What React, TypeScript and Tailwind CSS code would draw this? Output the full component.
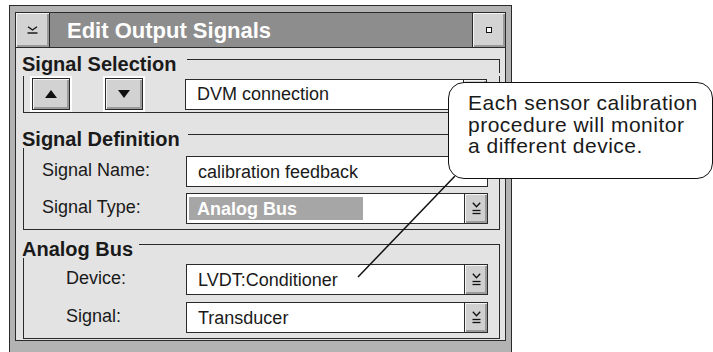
import React from 'react';

const ink = 'border-[#2a2a2a]';

function DropIcon() {
  return (
    <svg width="9" height="13" viewBox="0 0 9 13" fill="none" stroke="#111" strokeWidth="1.3">
      <polyline points="0.8,0.8 4.5,4.8 8.2,0.8" />
      <line x1="0.5" y1="8.5" x2="8.5" y2="8.5" />
      <line x1="0.5" y1="11.5" x2="8.5" y2="11.5" />
    </svg>
  );
}

function Field({children, drop, plain = true}: {children: React.ReactNode; drop?: boolean; plain?: boolean}) {
  return (
    <div className={`flex h-[31px] w-[302px] border ${ink} bg-white`}>
      <div className={`flex-1 flex items-center text-[18px] leading-none ${plain ? 'pl-[11px]' : 'pl-[2px]'}`}>
        {children}
      </div>
      {drop && (
        <div className={`w-[23px] border-l ${ink} bg-[#d0d0d0] shadow-[inset_1px_1px_0_#f4f4f4,inset_-2px_-2px_0_#9a9a9a] flex items-center justify-center`}>
          <DropIcon />
        </div>
      )}
    </div>
  );
}

function Group({title, gap, children, className}: {title: string; gap: string; children: React.ReactNode; className?: string}) {
  return (
    <div className={className}>
      <div className="flex">
        <div className="text-[20px] font-bold leading-[18px]">{title}</div>
        <div className={`flex-1 mt-[4px] border-t border-r ${ink} ${gap}`} />
      </div>
      <div className={`ml-[1px] border-l border-r border-b ${ink}`}>{children}</div>
    </div>
  );
}

function ArrowButton({up}: {up?: boolean}) {
  return (
    <div className="bg-white p-[2px]">
      <div className={`w-[38px] h-[32px] border ${ink} bg-[#d2d2d2] shadow-[inset_1px_1px_0_#f4f4f4,inset_-2px_-2px_0_#9a9a9a] flex items-center justify-center`}>
        <svg width="12" height="8" viewBox="0 0 12 8">
          {up ? <polygon points="6,0 12,8 0,8" fill="#111" /> : <polygon points="0,0 12,0 6,8" fill="#111" />}
        </svg>
      </div>
    </div>
  );
}

export default function App() {
  return (
    <div className="relative w-[713px] h-[352px] overflow-hidden bg-white text-[#1a1a1a] font-['Liberation_Sans',Arial,sans-serif]">
      <div className={`ml-[9px] mt-[5px] w-[503px] border ${ink} bg-[#b3b3b3] pt-[6px] px-[5px] pb-[14px]`}>
        <div className={`border ${ink}`}>
          {/* title bar */}
          <div className={`flex h-[35px] bg-[#8d8d8d] border-b ${ink}`}>
            <div className={`w-[34px] border-r ${ink} bg-[#d3d3d3] shadow-[inset_1px_1px_0_#f4f4f4,inset_-2px_-2px_0_#9a9a9a] flex items-center justify-center`}>
              <svg width="11" height="8" viewBox="0 0 11 8" fill="none" stroke="#111" strokeWidth="1.4">
                <polyline points="1,0.8 5.5,4 10,0.8" />
                <line x1="0.5" y1="7" x2="10.5" y2="7" />
              </svg>
            </div>
            <div className="flex-1 flex items-center pl-[17px] text-white text-[22px] font-bold">Edit Output Signals</div>
            <div className={`w-[33px] border-l ${ink} bg-[#d3d3d3] shadow-[inset_1px_1px_0_#f4f4f4,inset_-2px_-2px_0_#9a9a9a] flex items-center justify-center`}>
              <div className="w-[6px] h-[6px] border border-[#111] bg-white" />
            </div>
          </div>

          {/* body */}
          <div className="bg-[#e3e3e3] pt-[7px] pl-[6px] pr-[5px] pb-[1px]">
            <Group title="Signal Selection" gap="ml-[11px]">
              <div className="flex items-center h-[36px] mt-[3px] pl-[6px]">
                <ArrowButton up />
                <div className="ml-[31px]">
                  <ArrowButton />
                </div>
                <div className="ml-[40px]">
                  <Field drop>DVM connection</Field>
                </div>
              </div>
            </Group>

            <Group title="Signal Definition" gap="ml-[8px]" className="mt-[17px]">
              <div className="flex flex-col gap-[6px] pt-[8px] pb-[5px] pl-[18px]">
                <div className="flex items-center">
                  <div className="w-[144px] text-[18px] leading-none -mt-[3px]">Signal Name:</div>
                  <Field>calibration feedback</Field>
                </div>
                <div className="flex items-center">
                  <div className="w-[144px] text-[18px] leading-none -mt-[3px]">Signal Type:</div>
                  <Field drop plain={false}>
                    <div className="h-[23px] w-[174px] bg-[#a6a6a6] text-white font-bold flex items-center pl-[8px]">Analog Bus</div>
                  </Field>
                </div>
              </div>
            </Group>

            <Group title="Analog Bus" gap="ml-[6px]" className="mt-[10px]">
              <div className="flex flex-col gap-[7px] pt-[6px] pb-[5px] pl-[42px]">
                <div className="flex items-center">
                  <div className="w-[120px] text-[18px] leading-none -mt-[3px]">Device:</div>
                  <Field drop>LVDT:Conditioner</Field>
                </div>
                <div className="flex items-center">
                  <div className="w-[120px] text-[18px] leading-none -mt-[3px]">Signal:</div>
                  <Field drop>Transducer</Field>
                </div>
              </div>
            </Group>
          </div>
        </div>
      </div>

      {/* callout */}
      <svg className="absolute left-0 top-0 pointer-events-none" width="713" height="352">
        <line x1="455" y1="176" x2="358" y2="277" stroke="#111" strokeWidth="1.5" />
      </svg>
      <div className="absolute left-[448px] top-[82px] w-[265px] h-[97px] rounded-[16px] border-[1.5px] border-[#111] bg-white pl-[19px] pt-[9px] text-[21px] tracking-[0.5px] leading-[21.5px]">
        <div>Each sensor calibration</div>
        <div>procedure will monitor</div>
        <div>a different device.</div>
      </div>
    </div>
  );
}
